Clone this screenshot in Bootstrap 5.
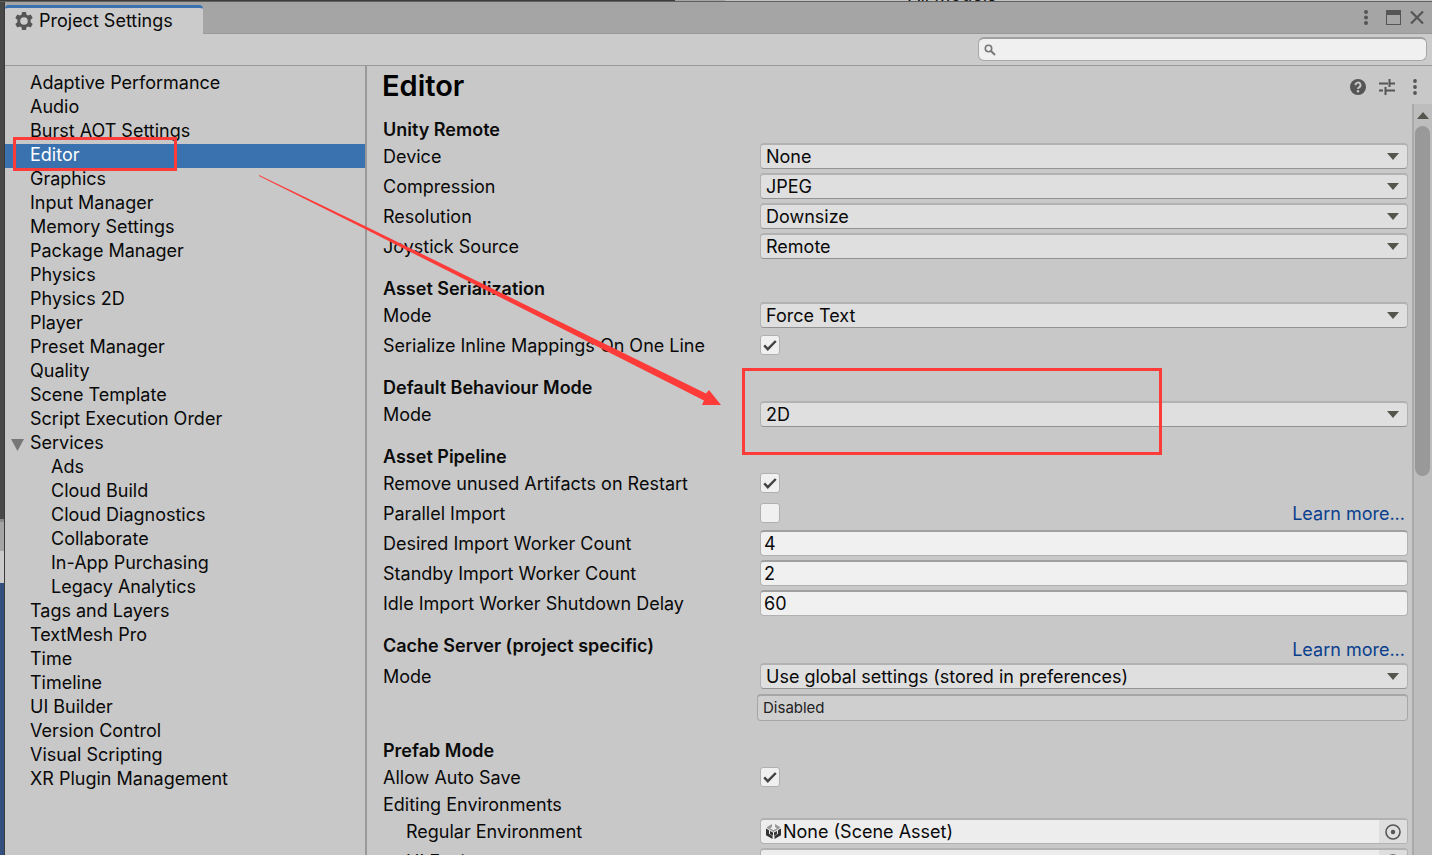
<!DOCTYPE html>
<html lang="en">
<head>
<meta charset="utf-8">
<meta name="viewport" content="width=device-width, initial-scale=1">
<title>Project Settings</title>
<link href="https://cdn.jsdelivr.net/npm/bootstrap@5.3.0/dist/css/bootstrap.min.css" rel="stylesheet">
<style>
:root{--panel:#c8c8c8;--line:#999;--ink:#090909;--icon:#555}
body{font-family:Inter,"Liberation Sans",sans-serif;font-size:18px;line-height:24px;color:var(--ink);background:var(--panel)}
/* slivers of the editor window behind */
.behind-top{height:2px;background:linear-gradient(90deg,#3c3c3c 675px,#a5a5a5 675px 725px,#c2c4c2 725px);border-bottom:1px solid #606060}
.behind-top span{margin-left:908px;line-height:24px;margin-top:-17px;color:#111}
.behind-left{width:5px;border-right:1px solid #3a3a3a;background:linear-gradient(#484848 517px,#8a8a8a 517px 520px,#a5a5a5 520px 549px,#cbcbcb 549px 581px,#334f7d 581px)}
.tabbar{height:32px;background:#a5a5a5;border-bottom:1px solid var(--line)}
.tab{background:#cbcbcb;border-top:3px solid #3a72b0;border-radius:4px 4px 0 0;width:198px;margin:3px 0 -1px;padding:0 0 1px 10px;gap:6px}
.icon-btn{border:0;background:none;padding:0;color:var(--icon);display:flex}
.searchbar{height:32px;background:#cbcbcb;border-bottom:1px solid var(--line);padding:3px 5px 4px}
.find{width:449px}
.find svg{position:absolute;left:6px;top:7px}
.find .form-control{height:24px;border:1px solid #a8a8a8;border-top:2px solid #a0a0a0;border-radius:6px;background:#f0f0f0;padding:0 8px 0 24px;font-size:16px}
.side{width:362px;border-right:2px solid var(--line);padding-top:6px}
.side a{display:block;height:24px;line-height:22px;padding-left:25px;color:var(--ink);text-decoration:none;position:relative}
.side .sub a{padding-left:46px}
.side a.current{background:#3a72b0;color:#fff}
.fold{position:absolute;left:6px;top:7px}
.head-row{height:38px;padding:0 14px 0 15px}
h1{font-size:29px;line-height:38px;font-weight:600;margin:0;padding-top:2px;color:#000}
.form-area{padding:14px 4px 0 16px}
section{margin-bottom:15px}
section.roomy{margin-bottom:17px}
h2{font-size:18px;line-height:24px;font-weight:600;margin:0;color:#0b0b0b}
.field-row{display:flex;align-items:center;height:30px}
.field-row.short{height:24px}
.field-row>label,.field-row>.lbl{flex:0 0 377px}
.field-row>.nested{padding-left:23px}
.form-select,.form-control{font-size:18px;line-height:22px;height:26px;color:var(--ink);border-radius:4px;min-height:0}
.field-row .form-select,.field-row .form-control,.objfield{margin-bottom:2px}
.form-select{padding:0 30px 0 5px;border:1px solid #b2b2b2;border-top-width:2px;border-bottom-color:#939393;background-color:#dfdfdf;background-image:url("data:image/svg+xml,%3Csvg xmlns='http://www.w3.org/2000/svg' width='12' height='7'%3E%3Cpath d='M0 0h12L6 7z' fill='%2355554c'/%3E%3C/svg%3E");background-size:12px 7px;background-position:right 8px center}
.field-row .form-control{padding:0 3px;border:1px solid #b2b2b2;border-top:2px solid #a0a0a0;background:#f0f0f0}
.form-check-input{width:20px;height:20px;margin:0 0 2px 0;border:1px solid #b0b0b0;background-color:#f0f0f0}
.form-check-input[type=checkbox]{border-radius:3px}
.form-check-input:checked{background-color:#f0f0f0;border-color:#b0b0b0;background-size:18px 18px}
.form-check-input:checked[type=checkbox]{background-image:url("data:image/svg+xml,%3Csvg xmlns='http://www.w3.org/2000/svg' viewBox='0 0 18 18'%3E%3Cpath d='M3.2 9.4l3.6 3.8 8-8.2' fill='none' stroke='%23444' stroke-width='2.4'/%3E%3C/svg%3E")}
.more{color:#0a3f8e;text-decoration:none;padding-right:3px}
.status{flex:1;margin-left:-3px;height:27px;border:1px solid #a6a6a6;border-top-width:2px;border-radius:4px;background:#cfcfcf;font-size:15px;line-height:24px;padding-left:5px;color:#222}
.objfield{flex:1;height:26px;border:1px solid #b2b2b2;border-top-width:2px;border-radius:4px;background:#ededed;padding-left:5px;gap:2px;overflow:hidden}
.objfield button{width:28px;height:23px;background:#dedede;align-items:center;justify-content:center}
.scroller{width:20px;border-left:2px solid #aaa;background:#bdbdbd;padding:8px 2px 0 1px}
.thumb{height:350px;border-radius:8px;background:#999;margin-top:7px}
.marks{position:absolute;left:0;top:0;pointer-events:none;z-index:5}
</style>
</head>
<body>
<div class="d-flex flex-column vh-100 overflow-hidden position-relative">
  <div class="behind-top d-flex overflow-hidden flex-shrink-0" aria-hidden="true"><span>All Models</span></div>
  <div class="d-flex flex-grow-1" style="min-height:0">
    <div class="behind-left flex-shrink-0"></div>
    <div class="d-flex flex-column flex-grow-1 overflow-hidden">
      <header class="tabbar d-flex justify-content-between flex-shrink-0">
        <div class="tab d-flex align-items-center">
          <svg width="18" height="18" viewBox="0 0 18 18"><path fill="#555" fill-rule="evenodd" d="M7 0h4l.5 2.7 1.6.9 2.6-1 2 3.4-2.1 1.8v2.4l2.1 1.8-2 3.4-2.6-1-1.6.9L11 18H7l-.5-2.7-1.6-.9-2.6 1-2-3.4 2.1-1.8V7.800L.3 6l2-3.400 2.600 1 1.600-.9zM9 5.200a3.800 3.800 0 1 0 0 7.600 3.800 3.800 0 0 0 0-7.600z"/></svg>
          <span>Project Settings</span>
        </div>
        <div class="d-flex align-items-center pe-2">
          <button class="icon-btn" aria-label="Window menu"><svg width="6" height="18" fill="#555"><circle cx="3" cy="3" r="2"/><circle cx="3" cy="8.500" r="2"/><circle cx="3" cy="14" r="2"/></svg></button>
          <button class="icon-btn ms-3" aria-label="Maximize"><svg width="16" height="16"><path fill="#555" fill-rule="evenodd" d="M1 0h15v15H1zM2 5v9h13V5z"/></svg></button>
          <button class="icon-btn ms-2" aria-label="Close"><svg width="15" height="15"><path d="M2 1.500l12 12m0-12l-12 12" stroke="#555" stroke-width="2.200"/></svg></button>
        </div>
      </header>
      <div class="searchbar d-flex justify-content-end flex-shrink-0">
        <div class="find position-relative">
          <svg width="12" height="12" fill="none" stroke="#777"><circle cx="4.500" cy="4.500" r="3.200" stroke-width="1.600"/><path d="M7 7l4 4" stroke-width="2"/></svg>
          <input type="search" class="form-control" aria-label="Search settings">
        </div>
      </div>
      <div class="d-flex flex-grow-1" style="min-height:0">
        <nav class="side flex-shrink-0" aria-label="Settings">
          <a href="#">Adaptive Performance</a>
          <a href="#">Audio</a>
          <a href="#">Burst AOT Settings</a>
          <a href="#" class="current" aria-current="page">Editor</a>
          <a href="#">Graphics</a>
          <a href="#">Input Manager</a>
          <a href="#">Memory Settings</a>
          <a href="#">Package Manager</a>
          <a href="#">Physics</a>
          <a href="#">Physics 2D</a>
          <a href="#">Player</a>
          <a href="#">Preset Manager</a>
          <a href="#">Quality</a>
          <a href="#">Scene Template</a>
          <a href="#">Script Execution Order</a>
          <a href="#"><svg class="fold" width="13" height="12"><path d="M0 0h13L6.500 12z" fill="#777"/></svg>Services</a>
          <div class="sub">
            <a href="#">Ads</a>
            <a href="#">Cloud Build</a>
            <a href="#">Cloud Diagnostics</a>
            <a href="#">Collaborate</a>
            <a href="#">In-App Purchasing</a>
            <a href="#">Legacy Analytics</a>
          </div>
          <a href="#">Tags and Layers</a>
          <a href="#">TextMesh Pro</a>
          <a href="#">Time</a>
          <a href="#">Timeline</a>
          <a href="#">UI Builder</a>
          <a href="#">Version Control</a>
          <a href="#">Visual Scripting</a>
          <a href="#">XR Plugin Management</a>
        </nav>
        <main class="d-flex flex-column flex-grow-1 overflow-hidden">
          <div class="head-row d-flex justify-content-between align-items-center flex-shrink-0">
            <h1>Editor</h1>
            <div class="d-flex align-items-center pt-1">
              <button class="icon-btn" aria-label="Help"><svg width="16" height="16"><circle cx="8" cy="8" r="8" fill="#555"/><path d="M5.500 6.200a2.500 2.500 0 1 1 3.600 2.100C8.200 8.800 8 9.200 8 10" fill="none" stroke="#c8c8c8" stroke-width="1.900"/><circle cx="8" cy="12.300" r="1.200" fill="#c8c8c8"/></svg></button>
              <button class="icon-btn ms-2 ps-1" aria-label="Presets"><svg width="18" height="16" stroke="#555" stroke-width="2" fill="none"><path d="M1 4.500h9M12 4.500h5M11.500 0v8M1 11.500h4M7 11.500h10M7.500 8v8"/></svg></button>
              <button class="icon-btn ms-3" aria-label="More options"><svg width="6" height="16" fill="#555"><circle cx="3" cy="2" r="1.900"/><circle cx="3" cy="8" r="1.900"/><circle cx="3" cy="14" r="1.900"/></svg></button>
            </div>
          </div>
          <div class="d-flex flex-grow-1" style="min-height:0">
            <form class="form-area flex-grow-1 overflow-hidden">
              <section>
                <h2>Unity Remote</h2>
                <div class="field-row"><label for="device">Device</label><select class="form-select" id="device"><option>None</option></select></div>
                <div class="field-row"><label for="comp">Compression</label><select class="form-select" id="comp"><option>JPEG</option></select></div>
                <div class="field-row"><label for="res">Resolution</label><select class="form-select" id="res"><option>Downsize</option></select></div>
                <div class="field-row"><label for="joy">Joystick Source</label><select class="form-select" id="joy"><option>Remote</option></select></div>
              </section>
              <section>
                <h2>Asset Serialization</h2>
                <div class="field-row"><label for="ser">Mode</label><select class="form-select" id="ser"><option>Force Text</option></select></div>
                <div class="field-row"><label for="inl">Serialize Inline Mappings On One Line</label><input type="checkbox" class="form-check-input" id="inl" checked></div>
              </section>
              <section>
                <h2>Default Behaviour Mode</h2>
                <div class="field-row"><label for="beh">Mode</label><select class="form-select" id="beh"><option>2D</option></select></div>
              </section>
              <section>
                <h2>Asset Pipeline</h2>
                <div class="field-row"><label for="rem">Remove unused Artifacts on Restart</label><input type="checkbox" class="form-check-input" id="rem" checked></div>
                <div class="field-row"><label for="par">Parallel Import</label><input type="checkbox" class="form-check-input" id="par"><a href="#" class="more ms-auto">Learn more...</a></div>
                <div class="field-row"><label for="des">Desired Import Worker Count</label><input type="text" class="form-control" id="des" value="4"></div>
                <div class="field-row"><label for="sta">Standby Import Worker Count</label><input type="text" class="form-control" id="sta" value="2"></div>
                <div class="field-row"><label for="idl">Idle Import Worker Shutdown Delay</label><input type="text" class="form-control" id="idl" value="60"></div>
              </section>
              <section class="roomy">
                <div class="d-flex justify-content-between"><h2>Cache Server (project specific)</h2><a href="#" class="more pt-1">Learn more...</a></div>
                <div class="field-row"><label for="cac">Mode</label><select class="form-select" id="cac"><option>Use global settings (stored in preferences)</option></select></div>
                <div class="field-row"><span class="lbl"></span><div class="status">Disabled</div></div>
              </section>
              <section>
                <h2>Prefab Mode</h2>
                <div class="field-row"><label for="sav">Allow Auto Save</label><input type="checkbox" class="form-check-input" id="sav" checked></div>
                <div class="field-row short"><span class="lbl">Editing Environments</span></div>
                <div class="field-row"><span class="lbl nested">Regular Environment</span>
                  <div class="objfield d-flex align-items-center"><svg width="15" height="15" viewBox="0 0 15 15"><path fill="#999" d="M1 3l5-3v3L4 4.300l3.500 2 3.500-2L9 3V0l5 3v1L7.500 8 1 4z"/><path fill="#333" d="M0 4.500l3 1.800v3.500l3.500 2.200v3L0 11.200zM15 4.500l-3 1.800v3.500L8.500 12v3l6.500-3.800zM4 7l3 1.600v3.200L4 10zM11 7L8 8.600v3.200l3-1.800z"/></svg><span>None (Scene Asset)</span><button type="button" class="icon-btn ms-auto" aria-label="Select scene asset"><svg width="16" height="16"><circle cx="8" cy="8" r="7" fill="none" stroke="#555" stroke-width="1.600"/><circle cx="8" cy="8" r="2.200" fill="#555"/></svg></button></div></div>
                <div class="field-row"><span class="lbl nested">UI Environment</span>
                  <div class="objfield d-flex align-items-center"><button type="button" class="icon-btn ms-auto" aria-label="Select UI scene asset"><svg width="16" height="16"><circle cx="8" cy="8" r="7" fill="none" stroke="#555" stroke-width="1.600"/><circle cx="8" cy="8" r="2.200" fill="#555"/></svg></button></div></div>
              </section>
            </form>
            <div class="scroller flex-shrink-0">
              <svg class="d-block mx-auto" width="12" height="7"><path d="M0 7h12L6 0z" fill="#55554c"/></svg>
              <div class="thumb"></div>
            </div>
          </div>
        </main>
      </div>
    </div>
  </div>
  <!-- red call-outs drawn over the window -->
  <svg class="marks" width="1170" height="460" aria-hidden="true">
    <g fill="none" stroke="#fd3b39" stroke-width="3"><path d="M14.500 138.500h161v31h-161z"/><path d="M743.500 369.500h417v84h-417z"/></g>
    <path fill="#fd3b39" d="M259 175L366 226.500 706 393.500l3-3.500 12 15h-19l2-4.500L366 229.500 259 176z"/>
  </svg>
</div>
<script src="https://cdn.jsdelivr.net/npm/bootstrap@5.3.0/dist/js/bootstrap.bundle.min.js"></script>
</body>
</html>
